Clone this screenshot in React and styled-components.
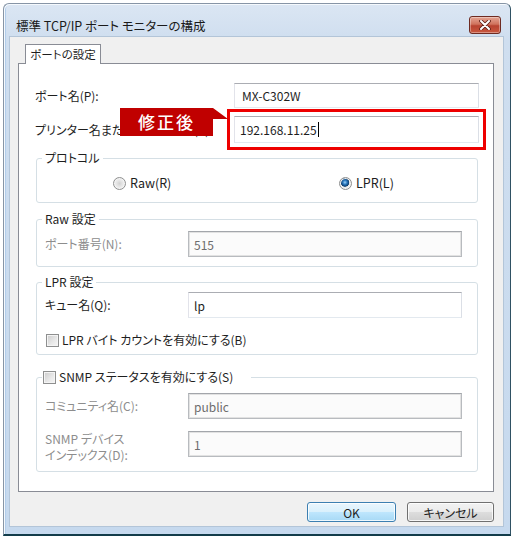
import React from 'react'
import styled, { createGlobalStyle } from 'styled-components'

const Global = createGlobalStyle`
  body{
    margin:0;
    background:#fff;
    font-family:"Noto Sans CJK JP","Noto Sans",sans-serif;
    font-feature-settings:"palt";
    font-size:12px;
    color:#1e1e1e;
  }
`
const Window = styled.div`
  box-sizing:border-box;
  width:508px;
  height:533px;
  margin:3px 0 0 3px;
  border:1px solid #8795a6;
  border-right-color:#2f5163;
  border-bottom:2px solid #123c4a;
  border-radius:6px 6px 0 0;
  background:linear-gradient(to bottom,#dbe6f3 0,#cfdeef 36px,#c6d9ee 100%);
  box-shadow:inset 1px 1px 0 #f5f9fd, inset 2px 0 0 #b2cdea;
  display:flex;
  flex-direction:column;
`
const TitleBar = styled.div`
  box-sizing:border-box;
  height:33px;
  padding:9px 9px 0 12px;
  display:flex;
  align-items:center;
  justify-content:space-between;
`
const Title = styled.div`
  font-size:12.5px;
  color:#1a1a1a;
  white-space:pre;
`
const Close = styled.div`
  box-sizing:border-box;
  width:32px;
  height:18px;
  border:1px solid #6e2b22;
  border-radius:3px;
  background:linear-gradient(to bottom,#e5a594 0,#d0735d 45%,#b84330 55%,#c9583f 100%);
  box-shadow:inset 0 0 0 1px rgba(255,255,255,0.35);
  display:flex;
  align-items:center;
  justify-content:center;
`
const Client = styled.div`
  box-sizing:border-box;
  height:489px;
  margin:0 7px 0 6px;
  padding:7px 9px 4px 8px;
  background:#f0f0f0;
  box-shadow:0 0 0 1px #b3c5d8;
  display:flex;
  flex-direction:column;
`
const Tab = styled.div`
  box-sizing:border-box;
  align-self:flex-start;
  width:76px;
  height:20px;
  margin:0 0 -1px 7px;
  border:1px solid #898c95;
  border-bottom:none;
  background:#fff;
  position:relative;
  z-index:1;
  font-size:11.5px;
  line-height:18px;
  text-align:center;
`
const Pane = styled.div`
  box-sizing:border-box;
  height:429px;
  border:1px solid #898c95;
  background:#fff;
  padding:19px 14px 17px 16px;
  display:flex;
  flex-direction:column;
`
const FieldRow = styled.div`
  display:grid;
  grid-template-columns:199px 1fr;
  align-items:center;
  margin-top:${p => p.$gap || 0}px;
  position:relative;
`
const Label = styled.div`
  color:${p => p.$disabled ? '#8d8d8d' : '#1e1e1e'};
  line-height:16px;
  white-space:pre;
  overflow:hidden;
  max-width:${p => p.$clip ? `${p.$clip}px` : 'none'};
`
const TextBox = styled.div`
  box-sizing:border-box;
  height:${p => p.$h || 26}px;
  padding-left:${p => p.$pad || 5}px;
  border:1px solid ${p => p.$disabled ? '#a3a6ab' : '#abadb3'};
  border-right-color:${p => p.$disabled ? '#b8bbbf' : '#dbdfe6'};
  border-bottom-color:${p => p.$disabled ? '#b8bbbf' : '#e3e9ef'};
  border-left-color:${p => p.$disabled ? '#b8bbbf' : '#e2e3ea'};
  box-shadow:${p => p.$disabled ? 'inset 0 0 0 1px #e2e2e2' : 'none'};
  background:${p => p.$disabled ? '#fbfbfb' : '#fff'};
  color:${p => p.$disabled ? '#6d6d6d' : '#1e1e1e'};
  display:flex;
  align-items:center;
  outline:${p => p.$marked ? '3px solid #ee0000' : 'none'};
  outline-offset:4px;
`
const Caret = styled.span`
  display:inline-block;
  width:1px;
  height:15px;
  background:#000;
  margin-left:1px;
`
const Callout = styled.div`
  position:absolute;
  left:85px;
  top:-8px;
  width:108px;
  height:28px;
  box-sizing:border-box;
  padding-right:15px;
  background:#c00000;
  clip-path:polygon(0 0,93px 0,108px 11px,93px 11px,93px 28px,0 28px);
  color:#fff;
  font-size:17px;
  font-weight:500;
  letter-spacing:2px;
  line-height:28px;
  text-align:center;
`
const Group = styled.fieldset`
  margin:${p => p.$gap || 7}px 1px 0 1px;
  padding:0;
  min-width:0;
  border:1px solid #d5dfe5;
  border-radius:3px;
`
const Legend = styled.legend`
  margin-left:5px;
  padding:0 ${p => p.$wide ? 18 : 3}px 0 ${p => p.$wide ? 1 : 3}px;
  line-height:16px;
  display:flex;
  align-items:center;
  gap:3px;
`
const GroupBody = styled.div`
  padding:${p => p.$pad};
  display:flex;
  flex-direction:column;
`
const GroupRow = styled.div`
  display:grid;
  grid-template-columns:143px 1fr;
  align-items:${p => p.$top ? 'start' : 'center'};
  margin-top:${p => p.$gap || 0}px;
  padding-right:15px;
`
const RadioRow = styled.div`
  display:grid;
  grid-template-columns:226px auto;
  padding-left:76px;
`
const Option = styled.div`
  display:flex;
  align-items:center;
  gap:4px;
  line-height:16px;
  font-size:12.5px;
`
const Radio = styled.span`
  box-sizing:border-box;
  width:13px;
  height:13px;
  border-radius:50%;
  border:1px solid #8e8f8f;
  background:${p => p.$on
    ? 'radial-gradient(circle at 45% 40%,#9fd3f7 0,#2c7ac0 2px,#0d3d6e 4px,#e6e6e6 4.6px,#f7f7f7 100%)'
    : 'radial-gradient(circle at 50% 50%,#d2d2d2 0,#e6e6e6 3px,#f8f8f8 100%)'};
  box-shadow:inset 0 0 0 1px #f4f4f4;
`
const Check = styled.span`
  box-sizing:border-box;
  width:13px;
  height:13px;
  border:1px solid #8e8f8f;
  background:linear-gradient(135deg,#cbcbcb 0,#e9e9e9 60%,#f6f6f6 100%);
  box-shadow:inset 0 0 0 1px #f4f4f4;
  flex:none;
`
const CheckRow = styled.div`
  display:flex;
  align-items:center;
  gap:3px;
  margin:${p => p.$gap || 0}px 0 0 1px;
  line-height:16px;
`
const Buttons = styled.div`
  display:flex;
  justify-content:flex-end;
  gap:11px;
  margin-top:10px;
`
const Button = styled.div`
  box-sizing:border-box;
  width:${p => p.$w}px;
  height:20px;
  border:1px solid ${p => p.$primary ? '#3c7fb1' : '#707070'};
  border-radius:3px;
  background:${p => p.$primary
    ? 'linear-gradient(to bottom,#eaf6fd 0,#d9f0fc 50%,#bee6fd 51%,#a7d9f5 100%)'
    : 'linear-gradient(to bottom,#f2f2f2 0,#ebebeb 50%,#dddddd 51%,#cfcfcf 100%)'};
  box-shadow:inset 0 0 0 1px rgba(255,255,255,0.8);
  display:flex;
  align-items:center;
  justify-content:center;
  font-size:12px;
`

const App = () => {
  return (
    <Window>
      <Global/>
      <TitleBar>
        <Title>標準 TCP/IP ポート モニターの構成</Title>
        <Close>
          <svg width="12" height="10" viewBox="0 0 12 10">
            <path d="M2 1 L10 9 M10 1 L2 9" stroke="#5a1e16" strokeWidth="3.6" strokeLinecap="round"/>
            <path d="M2 1 L10 9 M10 1 L2 9" stroke="#fff" strokeWidth="2" strokeLinecap="round"/>
          </svg>
        </Close>
      </TitleBar>
      <Client>
        <Tab>ポートの設定</Tab>
        <Pane>
          <FieldRow>
            <Label>ポート名(P):</Label>
            <TextBox $h={25} $pad={7}>MX-C302W</TextBox>
          </FieldRow>
          <FieldRow $gap={8}>
            {/* the callout covers the end of this label, as in the screenshot */}
            <Label $clip={178}>プリンター名または IP アドレス(A):</Label>
            <TextBox $h={27} $pad={5} $marked>192.168.11.25<Caret/></TextBox>
            <Callout>修正後</Callout>
          </FieldRow>

          <Group>
            <Legend>プロトコル</Legend>
            <GroupBody $pad="9px 0 11px 0">
              <RadioRow>
                <Option><Radio/>Raw(R)</Option>
                <Option><Radio $on/>LPR(L)</Option>
              </RadioRow>
            </GroupBody>
          </Group>

          <Group $gap={8}>
            <Legend>Raw 設定</Legend>
            <GroupBody $pad="4px 0 9px 8px">
              <GroupRow>
                <Label $disabled>ポート番号(N):</Label>
                <TextBox $disabled>515</TextBox>
              </GroupRow>
            </GroupBody>
          </Group>

          <Group>
            <Legend>LPR 設定</Legend>
            <GroupBody $pad="2px 0 6px 8px">
              <GroupRow>
                <Label>キュー名(Q):</Label>
                <TextBox>lp</TextBox>
              </GroupRow>
              <CheckRow $gap={14}><Check/>LPR バイト カウントを有効にする(B)</CheckRow>
            </GroupBody>
          </Group>

          <Group $gap={14}>
            <Legend $wide><Check/>SNMP ステータスを有効にする(S)</Legend>
            <GroupBody $pad="8px 0 8px 8px">
              <GroupRow>
                <Label $disabled>コミュニティ名(C):</Label>
                <TextBox $disabled>public</TextBox>
              </GroupRow>
              <GroupRow $gap={12} $top>
                <Label $disabled>{'SNMP デバイス\nインデックス(D):'}</Label>
                <TextBox $disabled>1</TextBox>
              </GroupRow>
            </GroupBody>
          </Group>
        </Pane>
        <Buttons>
          <Button $primary $w={89}>OK</Button>
          <Button $w={87}>キャンセル</Button>
        </Buttons>
      </Client>
    </Window>
  )
}

export default App
